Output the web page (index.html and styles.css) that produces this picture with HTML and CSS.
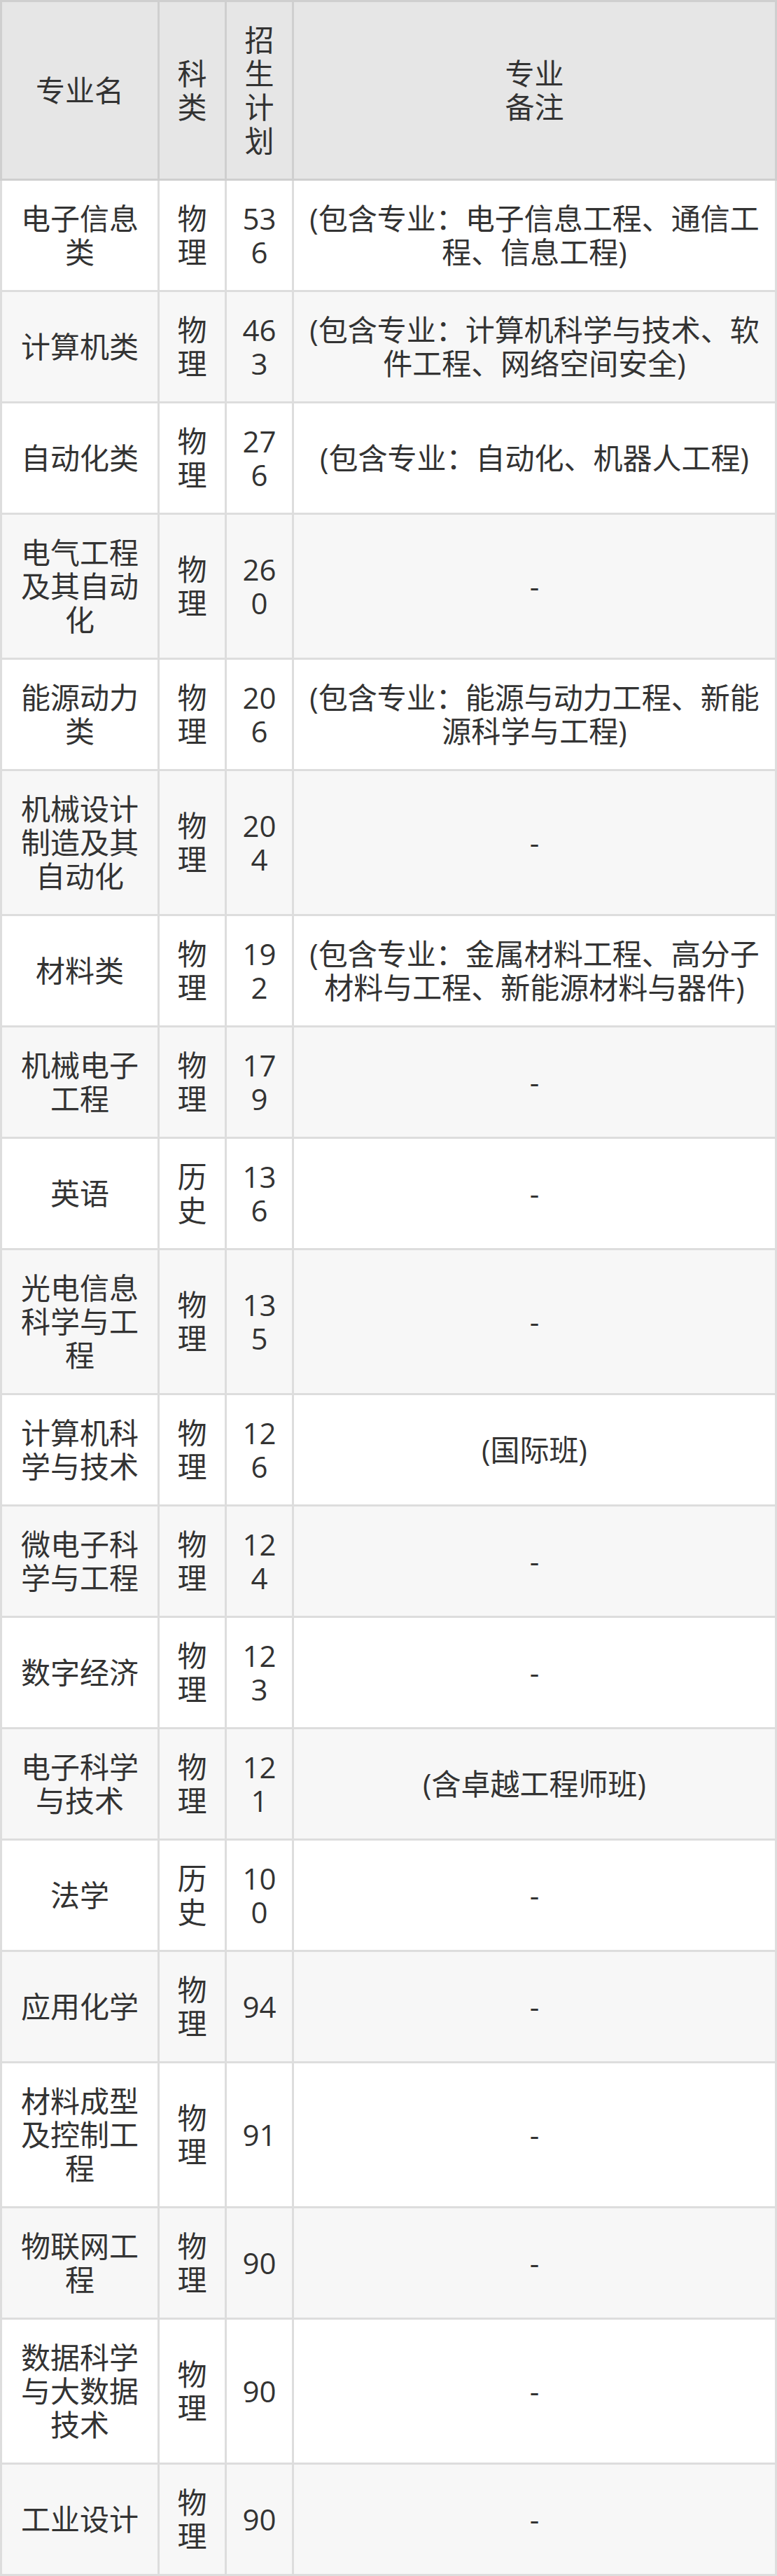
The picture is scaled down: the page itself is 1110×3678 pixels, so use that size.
FILE: index.html
```html
<!DOCTYPE html>
<html lang="zh-CN">
<head>
<meta charset="utf-8">
<title>专业招生计划</title>
<link rel="stylesheet" href="styles.css">
</head>
<body>
<table class="plan">
  <colgroup>
    <col class="c-name">
    <col class="c-type">
    <col class="c-num">
    <col class="c-note">
  </colgroup>
  <thead>
    <tr><th>专业名</th><th>科类</th><th>招生计划</th><th>专业<br>备注</th></tr>
  </thead>
  <tbody>
    <tr><td>电子信息类</td><td>物理</td><td>536</td><td>(包含专业：电子信息工程、通信工程、信息工程)</td></tr>
    <tr><td>计算机类</td><td>物理</td><td>463</td><td>(包含专业：计算机科学与技术、软件工程、网络空间安全)</td></tr>
    <tr><td>自动化类</td><td>物理</td><td>276</td><td>(包含专业：自动化、机器人工程)</td></tr>
    <tr><td>电气工程及其自动化</td><td>物理</td><td>260</td><td>-</td></tr>
    <tr><td>能源动力类</td><td>物理</td><td>206</td><td>(包含专业：能源与动力工程、新能源科学与工程)</td></tr>
    <tr><td>机械设计制造及其自动化</td><td>物理</td><td>204</td><td>-</td></tr>
    <tr><td>材料类</td><td>物理</td><td>192</td><td>(包含专业：金属材料工程、高分子材料与工程、新能源材料与器件)</td></tr>
    <tr><td>机械电子工程</td><td>物理</td><td>179</td><td>-</td></tr>
    <tr><td>英语</td><td>历史</td><td>136</td><td>-</td></tr>
    <tr><td>光电信息科学与工程</td><td>物理</td><td>135</td><td>-</td></tr>
    <tr><td>计算机科学与技术</td><td>物理</td><td>126</td><td>(国际班)</td></tr>
    <tr><td>微电子科学与工程</td><td>物理</td><td>124</td><td>-</td></tr>
    <tr><td>数字经济</td><td>物理</td><td>123</td><td>-</td></tr>
    <tr><td>电子科学与技术</td><td>物理</td><td>121</td><td>(含卓越工程师班)</td></tr>
    <tr><td>法学</td><td>历史</td><td>100</td><td>-</td></tr>
    <tr><td>应用化学</td><td>物理</td><td>94</td><td>-</td></tr>
    <tr><td>材料成型及控制工程</td><td>物理</td><td>91</td><td>-</td></tr>
    <tr><td>物联网工程</td><td>物理</td><td>90</td><td>-</td></tr>
    <tr><td>数据科学与大数据技术</td><td>物理</td><td>90</td><td>-</td></tr>
    <tr><td>工业设计</td><td>物理</td><td>90</td><td>-</td></tr>
  </tbody>
</table>
</body>
</html>
```
FILE: styles.css
```css
html, body {
  margin: 0;
  padding: 0;
  background: #ffffff;
}

.plan {
  width: 1110px;
  table-layout: fixed;
  border-collapse: collapse;
  font-family: "Open Sans", "Noto Sans CJK SC", sans-serif;
  font-size: 42px;
  line-height: 48px;
  color: #333333;
}

.c-name { width: 225px; }
.c-type { width: 96px; }
.c-num { width: 96px; }

.plan th,
.plan td {
  padding: 30px 15px;
  text-align: center;
  vertical-align: middle;
  word-break: break-all;
}

.plan th {
  font-weight: normal;
  background: #e6e6e6;
  border: 3px solid #cfcfcf;
}

.plan td {
  border: 3px solid #dddddd;
}

.plan tbody tr:nth-child(odd) td {
  background: #ffffff;
}

.plan tbody tr:nth-child(even) td {
  background: #f7f7f7;
}
```
